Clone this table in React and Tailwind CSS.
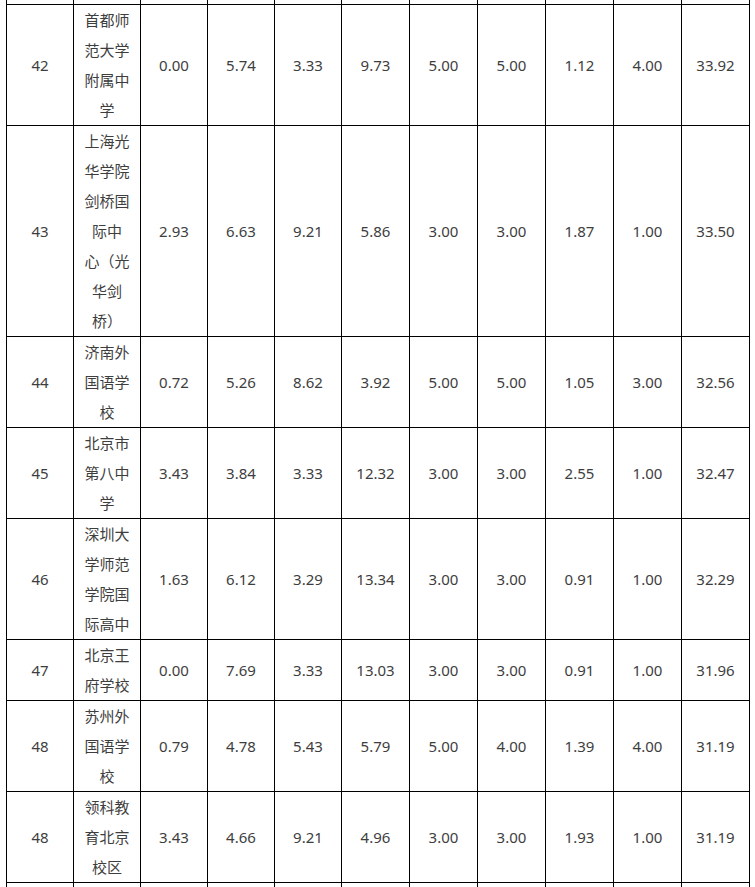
import React from "react";

const rows = [
  ["42", ["首都师", "范大学", "附属中", "学"], ["0.00", "5.74", "3.33", "9.73", "5.00", "5.00", "1.12", "4.00", "33.92"]],
  ["43", ["上海光", "华学院", "剑桥国", "际中", "心（光", "华剑", "桥）"], ["2.93", "6.63", "9.21", "5.86", "3.00", "3.00", "1.87", "1.00", "33.50"]],
  ["44", ["济南外", "国语学", "校"], ["0.72", "5.26", "8.62", "3.92", "5.00", "5.00", "1.05", "3.00", "32.56"]],
  ["45", ["北京市", "第八中", "学"], ["3.43", "3.84", "3.33", "12.32", "3.00", "3.00", "2.55", "1.00", "32.47"]],
  ["46", ["深圳大", "学师范", "学院国", "际高中"], ["1.63", "6.12", "3.29", "13.34", "3.00", "3.00", "0.91", "1.00", "32.29"]],
  ["47", ["北京王", "府学校"], ["0.00", "7.69", "3.33", "13.03", "3.00", "3.00", "0.91", "1.00", "31.96"]],
  ["48", ["苏州外", "国语学", "校"], ["0.79", "4.78", "5.43", "5.79", "5.00", "4.00", "1.39", "4.00", "31.19"]],
  ["48", ["领科教", "育北京", "校区"], ["3.43", "4.66", "9.21", "4.96", "3.00", "3.00", "1.93", "1.00", "31.19"]],
];

const cell = "border-r border-b border-black flex items-center justify-center text-center";

export default function App() {
  return (
    <div
      className="bg-white w-[755px] h-[887px] overflow-hidden text-[#3e3e3e] text-[15px] leading-[30px]"
      style={{ fontFamily: '"Noto Sans", "Noto Sans CJK SC", sans-serif' }}
    >
      <div className="ml-[6px] w-fit border-l border-black grid grid-cols-[67px_67px_67px_67px_67px_68px_68px_68px_68px_68px_68px]">
        {Array.from({ length: 11 }).map((_, i) => (
          <div key={"p" + i} className="h-[5px] border-r border-b border-black" />
        ))}
        {rows.map(([rank, name, vals], ri) => (
          <React.Fragment key={ri}>
            <div className={cell}>{rank}</div>
            <div className={cell + " flex-col"}>
              {name.map((l, li) => (
                <div key={li} className="whitespace-nowrap">{l}</div>
              ))}
            </div>
            {vals.map((v, vi) => (
              <div key={vi} className={cell}>{v}</div>
            ))}
          </React.Fragment>
        ))}
        {Array.from({ length: 11 }).map((_, i) => (
          <div key={"n" + i} className="h-[30px] border-r border-black" />
        ))}
      </div>
    </div>
  );
}
